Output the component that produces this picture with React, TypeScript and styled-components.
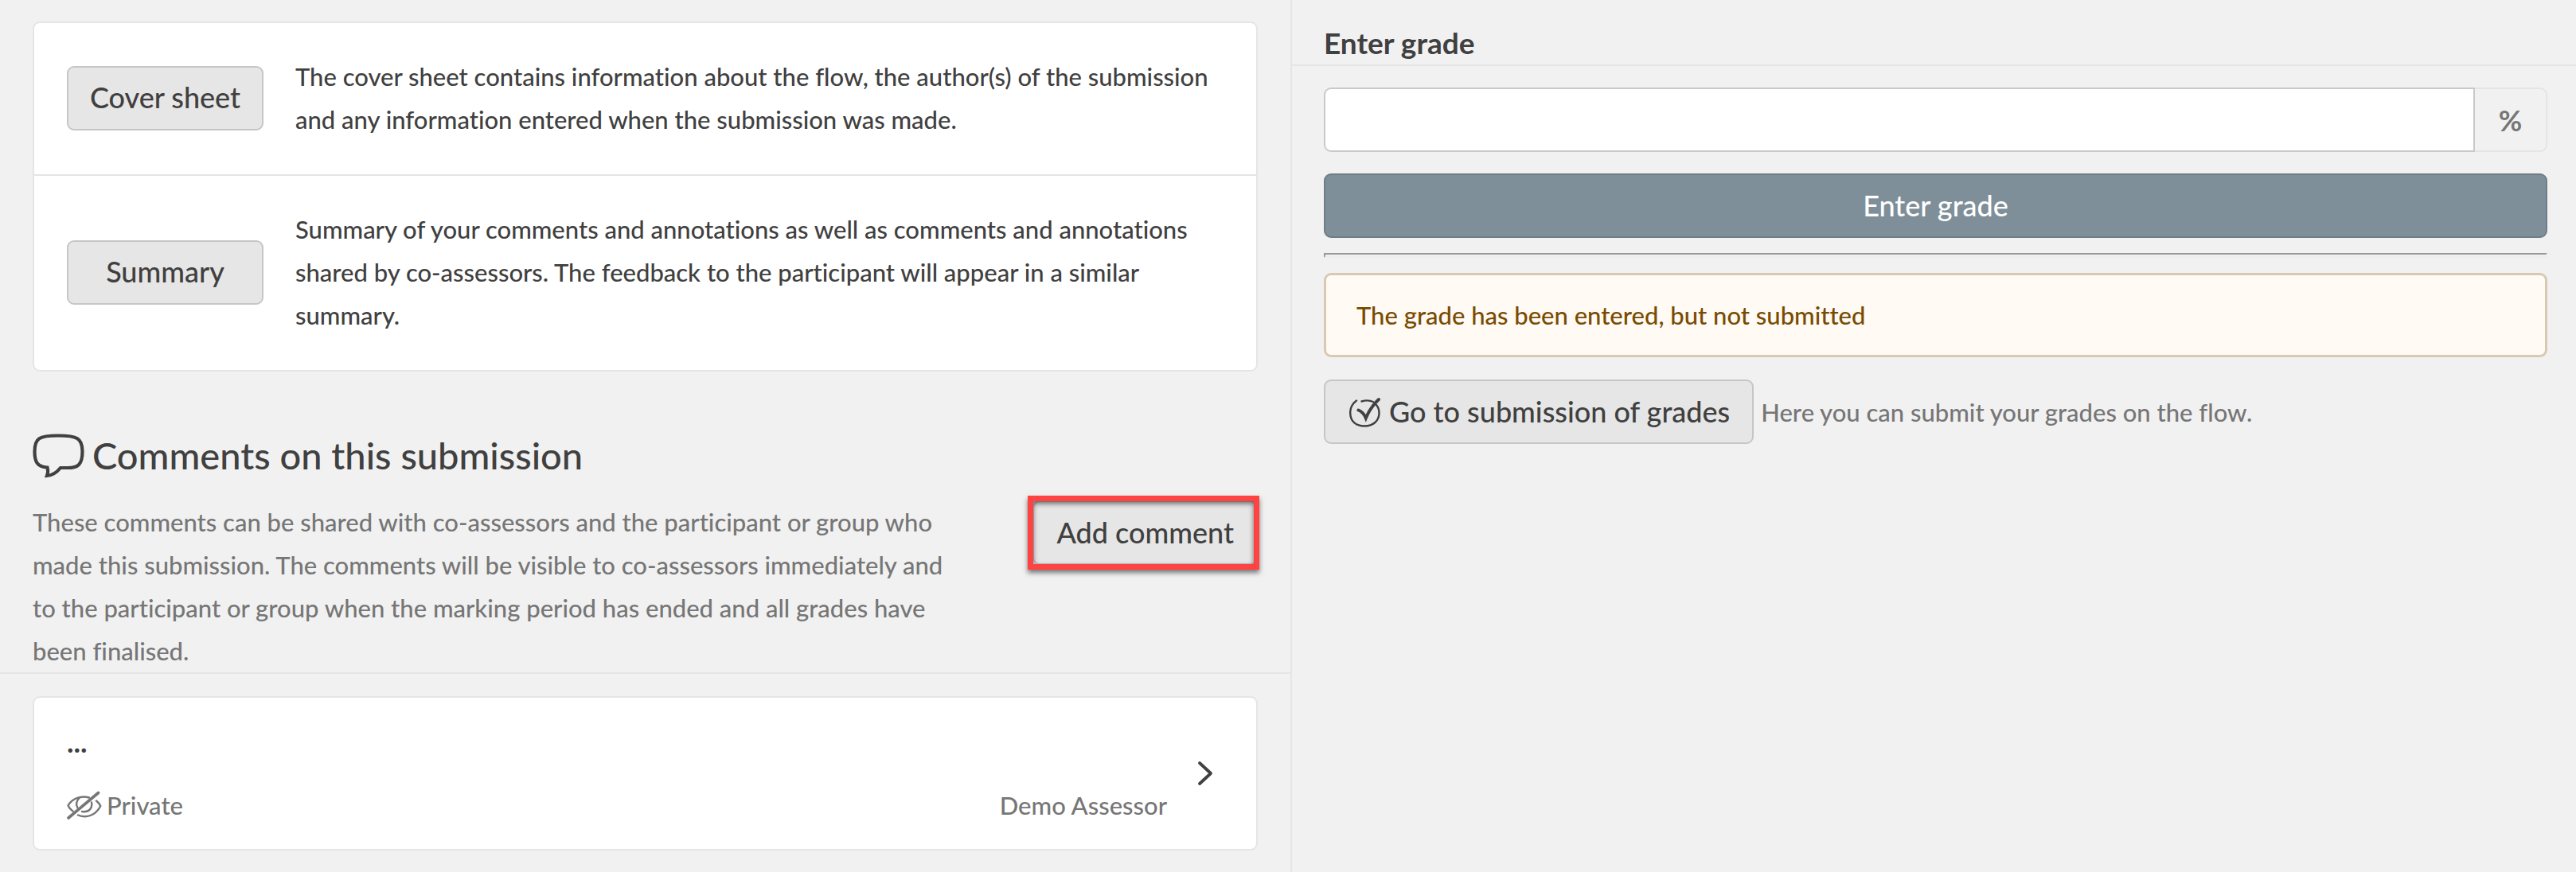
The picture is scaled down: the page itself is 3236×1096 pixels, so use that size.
import React, { useState } from "react";
import styled, { createGlobalStyle } from "styled-components";

const color = {
  page: "#f1f1f1",
  line: "#e5e5e5",
  ink: "#404040",
  muted: "#767676",
  button: "#e6e6e6",
  buttonLine: "#c6c6c6",
  primary: "#7e8f9a",
  primaryLine: "#6f7d87",
};

const strong = `
  font-family: Lato, "Noto Sans", sans-serif;
  font-weight: 700;
`;

const GlobalStyle = createGlobalStyle`
  *, *::before, *::after { box-sizing: border-box; }
  body {
    margin: 0;
    background: ${color.page};
    color: ${color.ink};
    font-family: "Lato Medium", Lato, "Noto Sans", sans-serif;
    font-size: 31px;
    line-height: 54px;
    font-variant-ligatures: no-common-ligatures;
  }
  h2, h3, p { margin: 0; }
  button, input { font: inherit; color: inherit; font-variant-ligatures: inherit; }
`;

const Page = styled.main`
  display: grid;
  grid-template-columns: calc(50% + 5px) 1fr;
  min-height: 100vh;
`;

const Submission = styled.section`
  padding-top: 27px;
  border-right: 2px solid ${color.line};
`;

const Grading = styled.section`
  min-width: 0;
  padding-top: 27px;
`;

const Card = styled.div`
  margin: 0 41px;
  background: #fff;
  border: 2px solid ${color.line};
  border-radius: 9px;
`;

const DocumentRow = styled.div`
  display: grid;
  grid-template-columns: 247px 1fr;
  align-items: center;
  gap: 40px;
  padding: 40px 41px 42px;

  & + & { border-top: 2px solid ${color.line}; }
`;

const Button = styled.button<{ $primary?: boolean }>`
  display: flex;
  align-items: center;
  justify-content: center;
  gap: 10px;
  width: ${p => (p.$primary ? "100%" : "auto")};
  height: 81px;
  padding: 0 28px 2px;
  border: 2px solid ${p => (p.$primary ? color.primaryLine : color.buttonLine)};
  border-radius: 9px;
  background: ${p => (p.$primary ? color.primary : color.button)};
  color: ${p => (p.$primary ? "#fff" : color.ink)};
  font-size: 36px;
  white-space: nowrap;
  cursor: pointer;
`;

const CommentsHeader = styled.header`
  margin-top: 76px;
  padding: 0 41px;
  border-bottom: 2px solid ${color.line};
`;

const CommentsTitle = styled.h2`
  display: flex;
  align-items: center;
  gap: 10px;
  margin-bottom: 28px;
  font-size: 47px;
  font-weight: 500;
`;

const CommentsIntro = styled.div`
  display: flex;
  align-items: flex-start;
  justify-content: space-between;
  gap: 80px;
`;

const Muted = styled.p`
  color: ${color.muted};
`;

const Highlight = styled.div`
  position: relative;
  flex: none;

  &::after {
    content: "";
    position: absolute;
    inset: -6px -2px -6px -6px;
    border: 7px solid #ff4242;
    box-shadow: 0 4px 6px rgba(0, 0, 0, 0.5), inset 0 3px 6px rgba(0, 0, 0, 0.55);
    pointer-events: none;
  }
`;

const CommentCard = styled(Card)`
  display: flex;
  align-items: center;
  gap: 38px;
  margin-top: 28px;
  padding: 28px 54px 28px 41px;
`;

const CommentBody = styled.div`
  flex: 1;
  display: grid;
  gap: 26px;
`;

const CommentText = styled.p`
  ${strong}
  font-size: 36px;
`;

const CommentMeta = styled.div`
  display: flex;
  justify-content: space-between;
  color: ${color.muted};
`;

const Visibility = styled.span`
  display: flex;
  align-items: center;
  gap: 6px;
`;

const GradeTitle = styled.h3`
  ${strong}
  padding-left: 40px;
  border-bottom: 2px solid ${color.line};
  font-size: 37px;
`;

const GradeForm = styled.form`
  display: grid;
  gap: 27px;
  margin: 27px 36px 0 40px;
`;

const GradeField = styled.div`
  display: flex;
  height: 81px;
`;

const GradeInput = styled.input`
  flex: 1;
  min-width: 0;
  padding: 0 28px;
  border: 2px solid #c9c9c9;
  border-radius: 9px 0 0 9px;
  background: #fff;
  font-size: 36px;
`;

const Unit = styled.label`
  ${strong}
  display: flex;
  align-items: center;
  justify-content: center;
  width: 91px;
  border: 2px solid ${color.line};
  border-left: 0;
  border-radius: 0 9px 9px 0;
  color: ${color.muted};
  font-size: 36px;
`;

const Rule = styled.hr`
  height: 6px;
  margin: 19px 36px 19px 40px;
  border: solid;
  border-width: 2px;
  border-color: #9a9a9a #ededed #ededed #9a9a9a;
`;

const Notice = styled.p`
  && { margin: 0 36px 28px 40px; }
  padding: 23px 38px;
  border: 3px solid #dac9b2;
  border-radius: 9px;
  background: #fffaf3;
  color: #794b02;
`;

const SubmitRow = styled.div`
  display: flex;
  align-items: center;
  gap: 9px;
  margin: 0 36px 0 40px;
`;

const SpeechIcon = () => (
  <svg width="65" height="58" viewBox="0 -2 65 58" fill="none" stroke="currentColor" strokeWidth="4.200" aria-hidden="true">
    <path d="M18.500 42.500C6 41.500 2.500 36 2.500 22.500C2.500 6 8 2.500 32 2.500C56 2.500 62.500 6 62.500 22.500C62.500 39 57 43 44 43H35C30.500 48.500 25 52.500 18 53C19.500 49 19.500 46 18.500 42.500Z" />
  </svg>
);

const CheckIcon = () => (
  <svg width="42" height="42" viewBox="-2 -4 42 42" fill="none" stroke="currentColor" strokeLinecap="round" aria-hidden="true">
    <path d="M9 3.500C3.500 7.500 1.200 12.500 1.200 19C1.200 30 9 35.500 19 35.500C30 35.500 37.500 29 37.500 19C37.500 15 36.300 11.700 34 9" strokeWidth="2.400" />
    <path d="M15.500 4.500C21 2.700 26 3.200 30 5" strokeWidth="2.400" />
    <path d="M11.500 15.500C15.500 17 18.500 20 20.800 25.500C24.500 16.500 29.500 9 37 2" strokeWidth="4" />
  </svg>
);

const HiddenIcon = () => (
  <svg width="44" height="36" viewBox="0 0 44 36" fill="none" stroke="currentColor" strokeWidth="2.400" strokeLinecap="round" aria-hidden="true">
    <path d="M28 8.500C17 5.500 6.500 10 1.500 18.500C3 21.500 5 23.800 7.500 25.500" />
    <path d="M37 12.500C39.500 14.500 41.200 16.700 42.300 19C36.500 30.500 25 35 14 30.500" />
    <path d="M16 8.500C11.500 13 11.500 18 13.500 21.500" />
    <path d="M31 14.500C32.500 21.500 28 27.500 19 26" />
    <path d="M2 34L39.500 2.500" strokeWidth="3.600" />
  </svg>
);

const ChevronIcon = () => (
  <svg width="20" height="32" viewBox="0 0 20 32" fill="none" stroke="currentColor" strokeWidth="3.800" strokeLinecap="round" strokeLinejoin="round" aria-hidden="true">
    <path d="M3 3L17 16L3 29" />
  </svg>
);

export default function App() {
  const [grade, setGrade] = useState("");

  return (
    <>
      <GlobalStyle />
      <Page>
        <Submission>
          <Card>
            <DocumentRow>
              <Button type="button">Cover sheet</Button>
              <p>
                The cover sheet contains information about the flow, the author(s) of the submission and any
                information entered when the submission was made.
              </p>
            </DocumentRow>
            <DocumentRow>
              <Button type="button">Summary</Button>
              <p>
                Summary of your comments and annotations as well as comments and annotations shared by
                co-assessors. The feedback to the participant will appear in a similar summary.
              </p>
            </DocumentRow>
          </Card>

          <CommentsHeader>
            <CommentsTitle>
              <SpeechIcon />
              Comments on this submission
            </CommentsTitle>
            <CommentsIntro>
              <Muted>
                These comments can be shared with co-assessors and the participant or group who made this
                submission. The comments will be visible to co-assessors immediately and to the participant or
                group when the marking period has ended and all grades have been finalised.
              </Muted>
              <Highlight>
                <Button type="button">Add comment</Button>
              </Highlight>
            </CommentsIntro>
          </CommentsHeader>

          <CommentCard>
            <CommentBody>
              <CommentText>...</CommentText>
              <CommentMeta>
                <Visibility>
                  <HiddenIcon />
                  Private
                </Visibility>
                <span>Demo Assessor</span>
              </CommentMeta>
            </CommentBody>
            <ChevronIcon />
          </CommentCard>
        </Submission>

        <Grading>
          <GradeTitle>Enter grade</GradeTitle>
          <GradeForm onSubmit={e => e.preventDefault()}>
            <GradeField>
              <GradeInput id="grade" type="text" value={grade} onChange={e => setGrade(e.target.value)} />
              <Unit htmlFor="grade">%</Unit>
            </GradeField>
            <Button type="submit" $primary>
              Enter grade
            </Button>
          </GradeForm>
          <Rule />
          <Notice>The grade has been entered, but not submitted</Notice>
          <SubmitRow>
            <Button type="button">
              <CheckIcon />
              Go to submission of grades
            </Button>
            <Muted>Here you can submit your grades on the flow.</Muted>
          </SubmitRow>
        </Grading>
      </Page>
    </>
  );
}
